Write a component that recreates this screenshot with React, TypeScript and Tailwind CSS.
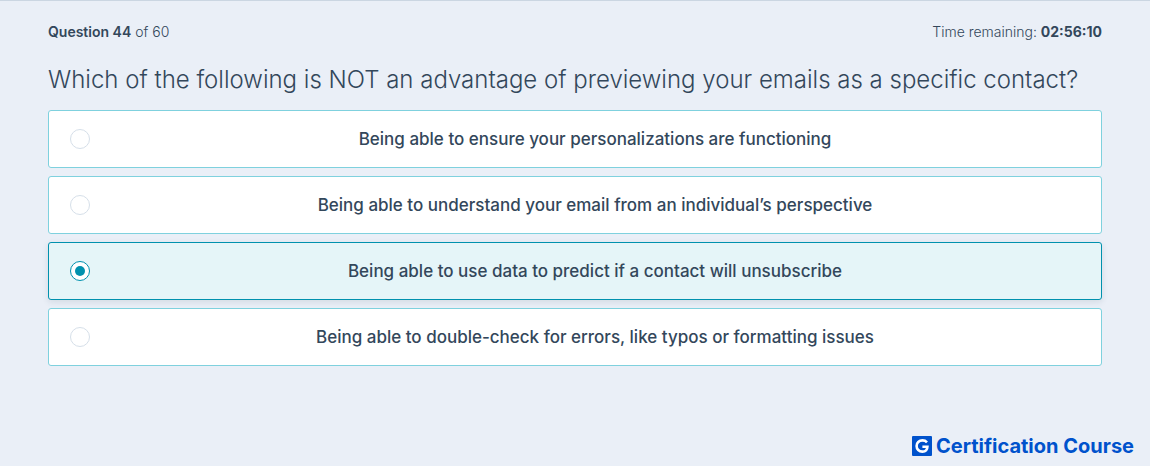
const answers = [
  'Being able to ensure your personalizations are functioning',
  'Being able to understand your email from an individual’s perspective',
  'Being able to use data to predict if a contact will unsubscribe',
  'Being able to double-check for errors, like typos or formatting issues',
];

function Answer({ text, selected }: { text: string; selected: boolean }) {
  return (
    <label className="flex min-h-[58px] cursor-pointer items-center gap-5 rounded-[3px] border border-[#7fd1de] bg-white px-[21px] has-checked:border-[#0091ae] has-checked:bg-[#e5f5f8] has-checked:shadow-[0_2px_6px_rgba(45,62,80,0.12)]">
      <input
        type="radio"
        name="answer"
        defaultChecked={selected}
        className="peer grid size-5 shrink-0 appearance-none place-content-center rounded-full border border-[#d6dfe9] bg-white before:size-[10px] before:rounded-full checked:border-[#0091ae] checked:before:bg-[#0091ae]"
      />
      <span className="flex-1 text-center text-[17px] leading-6 font-medium">{text}</span>
    </label>
  );
}

export default function App() {
  return (
    <main className="flex min-h-screen flex-col border-t border-[#cbd6e2] bg-[#eaeff7] font-['Inter',sans-serif] text-[#33475b]">
      <div className="px-12 pt-5">
        <div className="flex justify-between text-sm leading-[22px] font-light">
          <p>
            <strong className="font-semibold">Question 44</strong> of 60
          </p>
          <p>
            Time remaining: <strong className="font-bold">02:56:10</strong>
          </p>
        </div>
        <fieldset>
          <legend className="pt-[19px] pb-3 text-2xl leading-9 font-light">
            Which of the following is NOT an advantage of previewing your emails as a specific contact?
          </legend>
          <div className="flex flex-col gap-2">
            {answers.map((text, index) => (
              <Answer key={text} text={text} selected={index === 2} />
            ))}
          </div>
        </fieldset>
      </div>
      <footer className="mt-auto flex items-center justify-end gap-1 px-4 pb-2 text-[#0052cc]">
        <svg viewBox="0 0 20 20" className="size-5" aria-hidden="true">
          <rect width="20" height="20" rx="1" fill="currentColor" />
          <path
            d="M15 6.3C13.8 5 12.3 4.4 10.5 4.4 7 4.4 4.6 6.7 4.6 10s2.4 5.6 5.8 5.6c2.9 0 4.9-1.8 5-4.9h-5"
            fill="none"
            stroke="#fff"
            strokeWidth="2.6"
          />
        </svg>
        <span className="text-xl leading-6 font-bold">Certification Course</span>
      </footer>
    </main>
  );
}
